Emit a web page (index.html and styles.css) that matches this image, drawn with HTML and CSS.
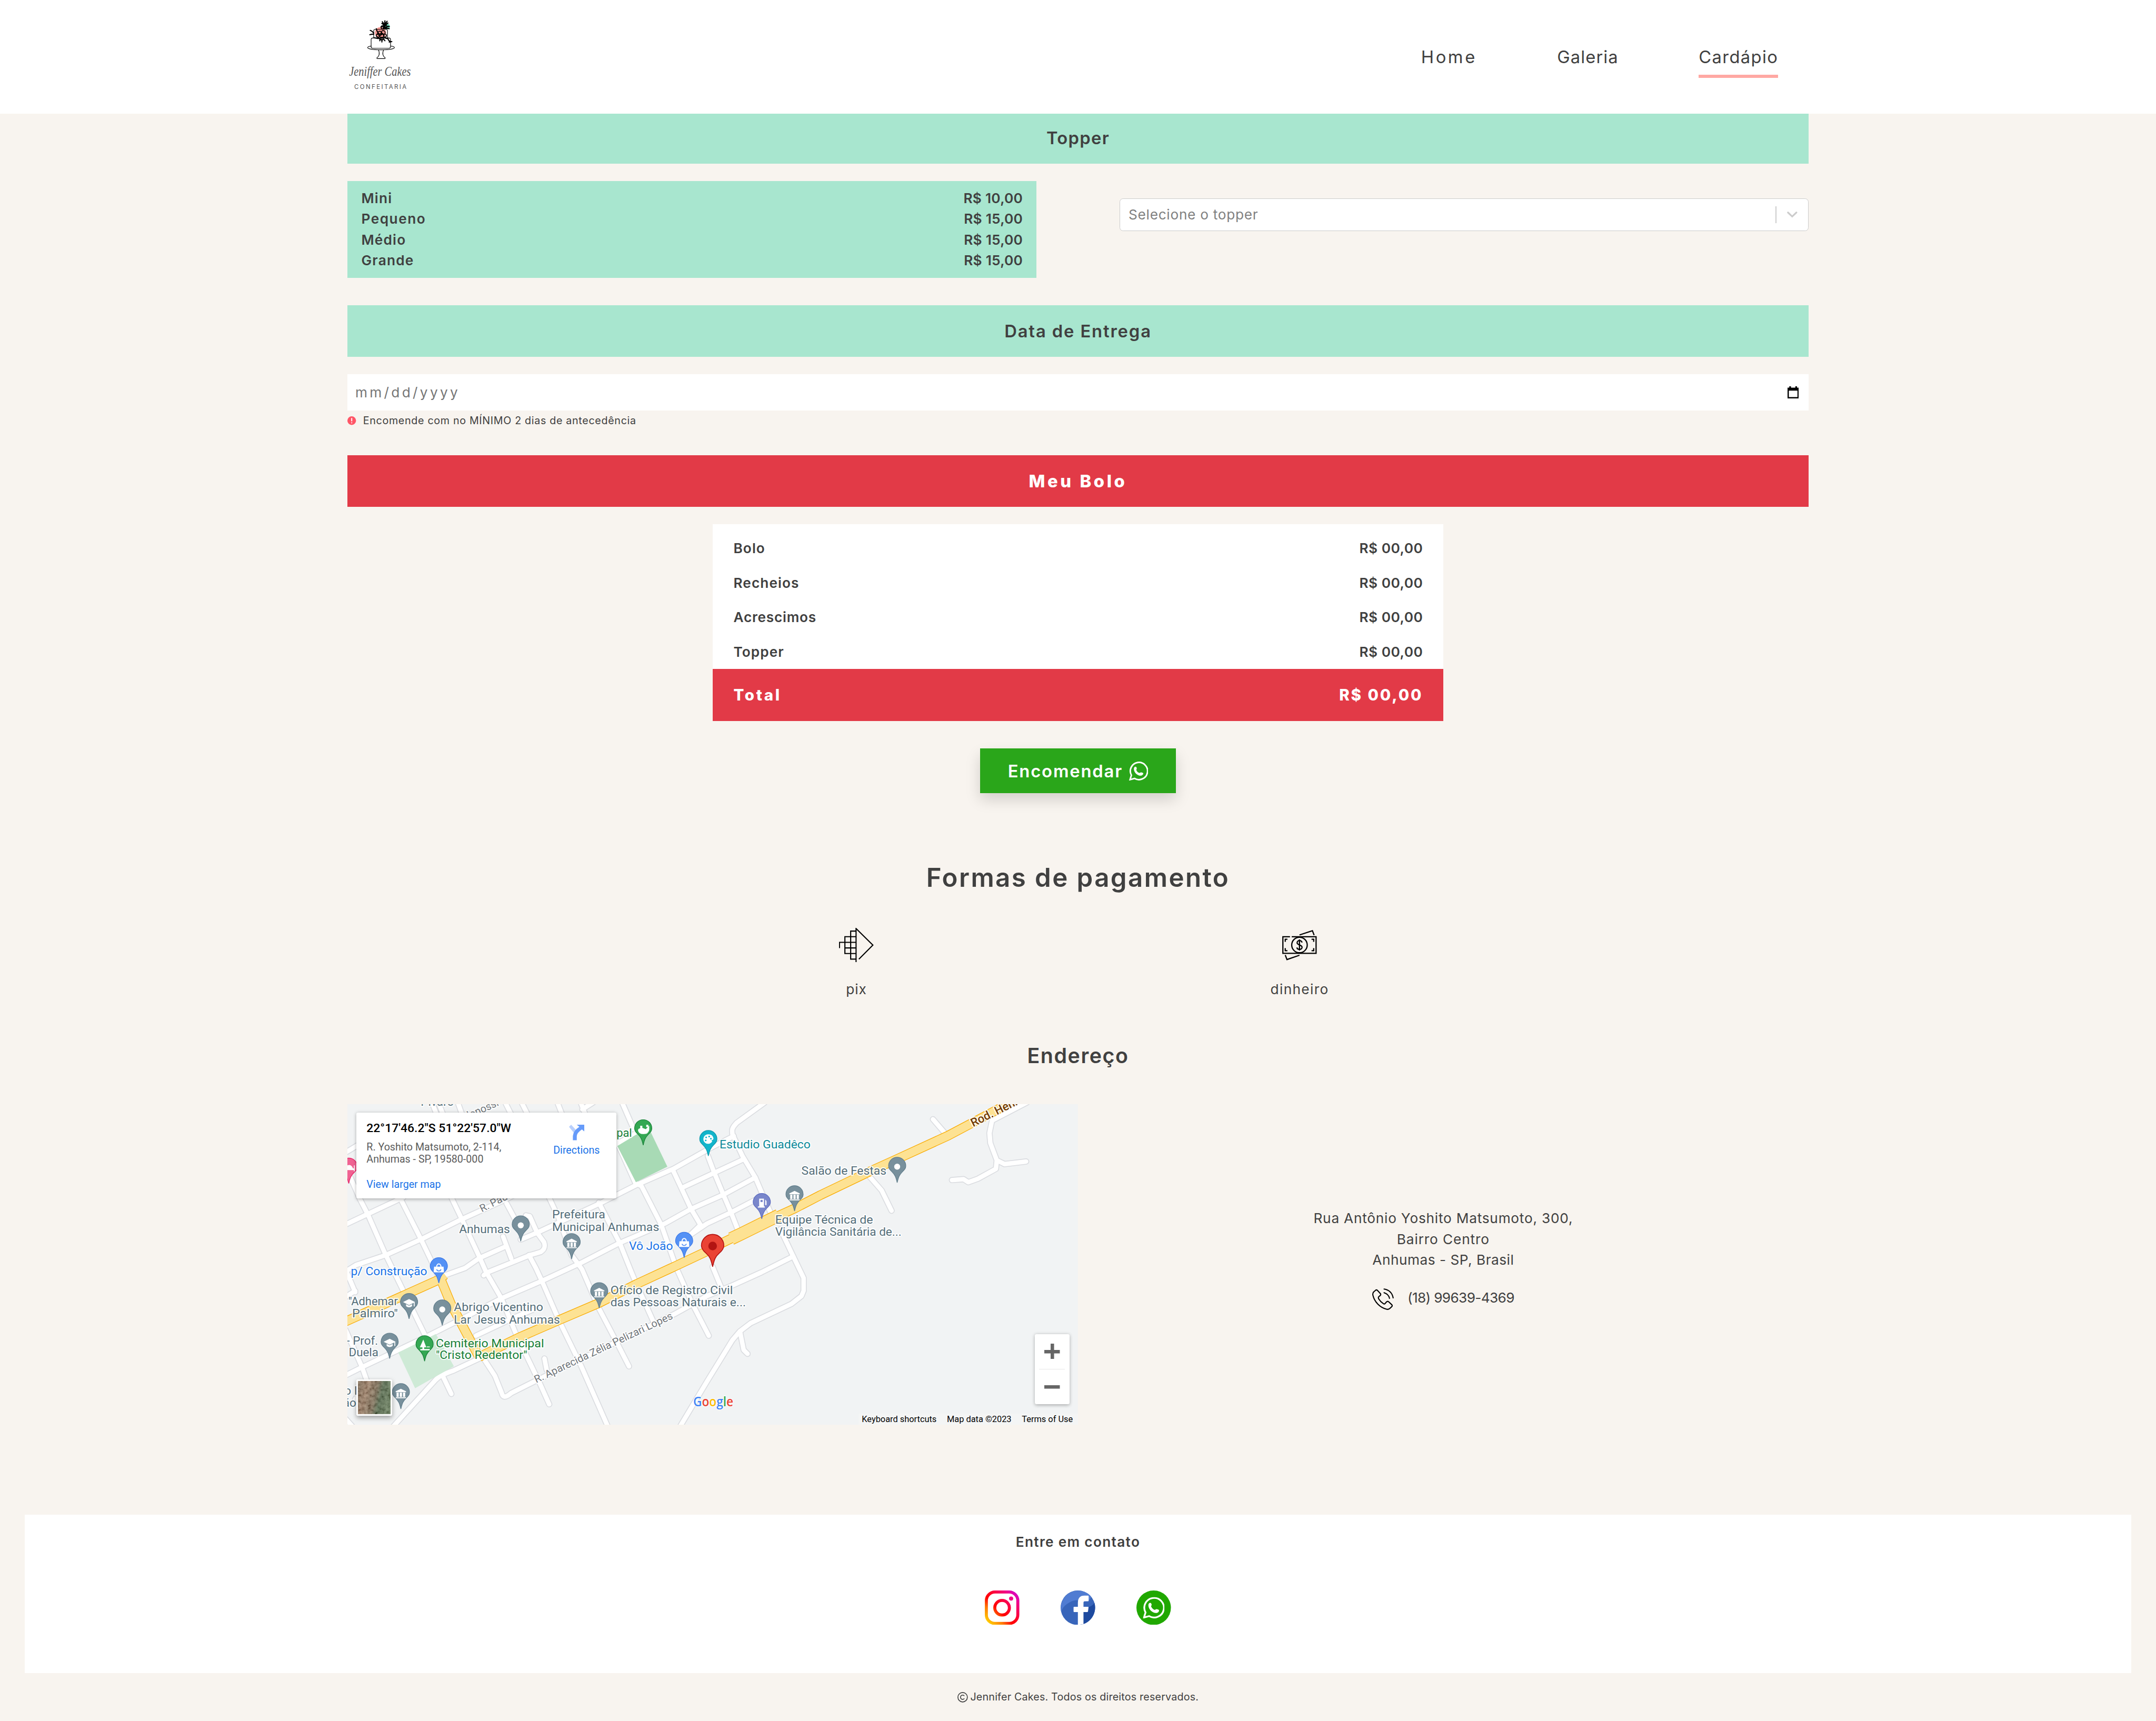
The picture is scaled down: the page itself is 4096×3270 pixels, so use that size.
FILE: index.html
```
<!DOCTYPE html>
<html lang="pt-BR">
<head>
<meta charset="utf-8">
<title>Jeniffer Cakes</title>
<link rel="stylesheet" href="styles.css">
</head>
<body>
<svg class="defs" aria-hidden="true">
  <symbol id="whatsapp" viewBox="0 0 44 44">
    <path d="M2.3 41.9 5.4 31.6A20 20 0 1 1 12.6 39.1Z" fill="none" stroke="currentColor" stroke-width="3.6"/>
    <path d="M14.5 12c2-.3 3.3 2 3.4 4.2 0 1.5-1.5 2.2-1 3.5 1.2 3.2 3.8 5.6 6.6 6.6 1.5.4 2.4-1.3 4-1.4 2.5 0 5.5 1.2 5.5 2.6 0 2.8-3 5.2-6 5.3C19 32.8 11.2 25 11.2 17c0-2.3 1.2-4.7 3.3-5z" fill="currentColor"/>
  </symbol>
</svg>

<header class="header">
  <div class="header-inner">
    <svg class="logo" viewBox="0 2 152 180">
      <circle cx="76.7" cy="36.5" r="13" fill="#ff9a94"/>
      <circle cx="92" cy="22" r="6.5" fill="#74d3b6"/>
      <g fill="none" stroke="#000" stroke-width="1.4" stroke-linecap="round">
        <path d="M61 49V32q0-3.500 3.500-3.500H89.500q3.500 0 3.500 3.500V49"/>
        <rect x="55" y="48.500" width="45" height="24" rx="4" fill="#fff"/>
        <path d="M55 67.500c-6 .5-8 1.500-8 3.500 0 3 13 5 31 5s31-2 31-5c0-2-2-3-8-3.500"/>
        <path d="M72 76c4 9 1 15-2.500 17.500-2 1-1.500 3 0 3h17c1.500 0 2-2 0-3C83 91 80 85 84 76"/>
        <path d="M53 31c4 1 5 3 8 6M52 41c4-1 6-2 9-1M67 27c1 5 3 9 7 12M97 58l6-1M94 50c1 4 2 6 6 7" stroke-width="2.600"/>
        <path d="M83 26c3-4 4-8 4-17M80 15c3 1 6 5 7 11M94 14c-4 2-7 7-8 12M78 23c3-2 8 0 12 3M97 22c-4-1-7 1-10 4M81 11l6 8M92 10l-5 7M97 27c-3-1-6-1-9 0" stroke-width="2.800"/>
        <path d="M76 50l-1 5M80 50v8M84 51l3 4M62 48l9 2M70 46l6 6M86 48l6 2" stroke-width="2.600"/>
      </g>
      <g fill="none" stroke="#000" stroke-width="2">
        <circle cx="82" cy="24" r="4"/><circle cx="88" cy="22" r="3.500"/>
        <circle cx="75" cy="38" r="5"/><circle cx="83" cy="36" r="4.500"/><circle cx="80" cy="43" r="5"/><circle cx="71" cy="43" r="4"/><circle cx="87" cy="43" r="3.500"/><circle cx="80" cy="50" r="3.500"/><circle cx="79" cy="39" r="2"/>
      </g>
      <text class="logo-name" x="4" y="136" textLength="143" lengthAdjust="spacingAndGlyphs">Jeniffer Cakes</text>
      <text class="logo-tag" x="16" y="167" textLength="121">CONFEITARIA</text>
    </svg>
    <nav class="nav">
      <a class="nav-link ls-home">Home</a>
      <a class="nav-link ls-galeria">Galeria</a>
      <a class="nav-link ls-cardapio active">Cardápio</a>
    </nav>
  </div>
</header>

<main class="container">
  <h2 class="bar bar-first">Topper</h2>
  <div class="topper">
    <ul class="prices">
      <li><span class="ls-mini">Mini</span><span class="ls-price">R$ 10,00</span></li>
      <li><span class="ls-pequeno">Pequeno</span><span class="ls-price">R$ 15,00</span></li>
      <li><span class="ls-mini">Médio</span><span class="ls-price">R$ 15,00</span></li>
      <li><span class="ls-mini">Grande</span><span class="ls-price">R$ 15,00</span></li>
    </ul>
    <div class="select">
      <span class="select-text">Selecione o topper</span>
      <span class="select-sep"></span>
      <svg class="chevron" viewBox="0 0 24 14"><path d="M2.200 2.200 12 11.400 21.800 2.200" fill="none" stroke="#ccc" stroke-width="4" stroke-linecap="round"/></svg>
    </div>
  </div>

  <h2 class="bar ls-data">Data de Entrega</h2>
  <div class="date">
    <span>mm/dd/yyyy</span>
    <svg class="calendar" viewBox="0 0 26 28"><path d="M1.500 5h23v21.500h-23z" fill="none" stroke="#000" stroke-width="3"/><path d="M0 3.500h26V10H0zM4 0h4v4H4zM18 0h4v4h-4z"/></svg>
  </div>
  <p class="hint">
    <svg viewBox="0 0 20 20"><circle cx="10" cy="10" r="10" fill="#ff5566"/><path d="M10 4v7.500M10 14v2.300" stroke="#fff" stroke-width="2.400"/></svg>
    <span>Encomende com no MÍNIMO 2 dias de antecedência</span>
  </p>

  <h2 class="bar bar-red">Meu Bolo</h2>
  <div class="summary">
    <ul class="summary-rows">
      <li><span>Bolo</span><span class="ls-zero">R$ 00,00</span></li>
      <li><span>Recheios</span><span class="ls-zero">R$ 00,00</span></li>
      <li><span class="ls-acres">Acrescimos</span><span class="ls-zero">R$ 00,00</span></li>
      <li><span>Topper</span><span class="ls-zero">R$ 00,00</span></li>
    </ul>
    <div class="total"><span>Total</span><span class="ls-total">R$ 00,00</span></div>
  </div>
  <button class="order"><span>Encomendar</span><svg><use href="#whatsapp"/></svg></button>

  <h2 class="title-lg">Formas de pagamento</h2>
  <div class="payments">
    <div class="payment">
      <svg class="pay-icon" viewBox="0 0 80 80"><g fill="none" stroke="#000" stroke-width="2.600"><path d="M39.500 80V1.500L78.500 40 46 72.500"/><path d="M39.500 7.500H27v65h12.500M39.500 20.500H13.600v39h25.900M1 47V33.500h38.500M13.600 46.500h25.900"/></g></svg>
      <span>pix</span>
    </div>
    <div class="payment">
      <svg class="pay-icon" viewBox="0 -5 80 80"><g fill="none" stroke="#000" stroke-width="2.800"><path d="M18 15.500H1.500v38.500h77V15.500H22"/><circle cx="40" cy="34.700" r="18"/><path d="M40 11.500 70 1.500l4 10.500M7 58l4 10.500L40 58.500"/><path d="M12 21.500H7v6M68 21.500h5v6M12 48H7v-6M68 48h5v-6"/><path d="M46 29c-1-3.500-3-4.500-6-4.500s-5.500 2-5.500 5c0 6.500 11.500 4 11.500 10.500 0 3-2.500 5-6 5s-5.500-1.500-6-4.500M40 22v25.500"/></g></svg>
      <span class="ls-dinheiro">dinheiro</span>
    </div>
  </div>

  <h2 class="title-md">Endereço</h2>
  <div class="address">
    <div class="map">
      <svg class="map-canvas" viewBox="0 0 1694 744">
        <defs>
          <g id="streets">
            <path d="M-6 174 7 170 29 220 48 257 89 350 117 407 182 540"/>
            <path d="M125 223 169 310 204 383 212 405"/>
            <path d="M242 218 265 266 306 354 321 388 358 452 391 533 446 647 468 696"/>
            <path d="M369 230 396 280"/><path d="M361 307 380 358"/>
            <path d="M414 258 423 260 440 298 456 320C460 332 456 338 448 343L424 350 325 390 316 397"/>
            <path d="M421 350 437 380 451 410 490 500 542 607 605 750"/>
            <path d="M467 215 490 264 520 350 544 383 583 473 627 557 653 608"/>
            <path d="M583 228 632 323 656 383 668 412 709 503"/>
            <path d="M615 65 668 183 682 190 728 280 763 380 802 467 834 529 838 537"/>
            <path d="M637-4 664 58"/><path d="M366-4 380 24M404-4 418 24M487-4 498 24M541-4 552 24M545 12 570-4M196-4 207 24M211-4 222 24M256-4 266 24"/>
            <path d="M755 153 797 243 819 280 786 312"/>
            <path d="M836 120 850 157 872 210 892 257 905 290"/>
            <path d="M968-4 903 43C890 57 892 60 893 70L916 120 946 170 963 210 983 255"/>
            <path d="M1004 290 1034 353 1058 403 1058 433 1053 445 1030 463 935 508 910 527 893 547 834 643 770 750"/>
            <path d="M911 530 919 570 928 579"/>
            <path d="M-4 112 24 95"/><path d="M-4 279 51 253 130 216"/>
            <path d="M-4 388 20 373 89 350 172 313 265 267 369 220 627 91 672 66"/>
            <path d="M226 397 273 380 306 357 365 331"/>
            <path d="M402 314 440 298 586 230 671 187 756 150 845 100 896 74"/>
            <path d="M-4 629 34 610 182 540 281 490 358 450 451 410 542 368 629 323 736 277 797 243 872 210 946 170"/>
            <path d="M780 192 834 167 918 128"/>
            <path d="M770 320 834 277 892 250 944 223"/>
            <path d="M298 537 391 493 429 477"/>
            <path d="M847 377 868 428"/>
            <path d="M104 750 204 640C215 628 230 624 248 617L312 587"/>
            <path d="M314 587 342 630 358 670C360 680 366 682 380 670L446 637 758 487 834 445 896 419 960 390 1034 353"/>
            <path d="M221 630 241 672M457 590 462 616"/>
            <path d="M0 393 18 436M-4 447 18 433M-4 524 34 610 48 650M-4 730 14 750M18 684 40 660"/>
            <path d="M1358 35 1390 72"/><path d="M1211 168 1239 200 1262 247"/>
            <path d="M1576-4 1495 38 1489 67 1491 90 1506 130 1504 150 1462 173 1440 181 1429 174 1402 176M1506 130 1524 139 1574 133"/>
          </g>
          <g id="highway">
            <path d="M-6 505 212 407 226 396"/><path d="M214 400 240 463 305 586"/>
            <path d="M306 586 396 542 495 499 584 461 671 417 764 374 834 341 867 323 916 299 993 262 1037 242 1097 211 1218 153 1273 128 1393 73 1514 9 1540-6"/>
          </g>
          <path id="pin" d="M0 0C-3-13-5-18-12-25-17-30-20-33-20-39A19.500 19.500 0 0 1 20-39C20-33 17-30 12-25 5-18 3-13 0 0Z" stroke-width="1.500"/>
          <g id="bank" fill="#fff"><path d="M-12-43 0-49 12-43v2h-24zM-10-40h5v10h-5zM-2.500-40h5v10h-5zM5-40h5v10H5zM-12-29h24v2h-24z"/></g>
          <g id="school" fill="#fff"><path d="M-14-39 0-46 14-39 0-32zM-7-34 0-30.500 7-34v4.500Q0-24 -7-29.500zM11-38h2v9h-2z"/></g>
          <g id="bag"><path d="M-11-41h22l1 13h-24z" fill="#fff"/><path d="M-5-40c0-10 10-10 10 0" fill="none" stroke="#fff" stroke-width="2.500"/><path d="M-5-35c1 5 9 5 10 0" fill="none" stroke="#5491f5" stroke-width="2"/></g>
        </defs>
        <rect width="1694" height="744" fill="#f1f3f4"/>
        <use href="#streets" class="street-edge"/>
        <use href="#streets" class="street"/>
        <path d="M626 97 684 62 704 66 742 145 669 181Z" fill="#a8dab5"/>
        <path d="M118 576 205 533 247 608 157 659Z" fill="#ceead6"/>
        <use href="#highway" class="highway-edge"/>
        <path d="M890 312 915 300 1000 258" class="highway-edge wide"/>
        <use href="#highway" class="highway"/>
        <path d="M890 312 915 300 1000 258" class="highway wide"/>

        <g class="poi">
          <text x="170" y="4" textLength="77" lengthAdjust="spacingAndGlyphs">Pivaro</text>
          <text x="475" y="265" textLength="123" lengthAdjust="spacingAndGlyphs">Prefeitura</text>
          <text x="475" y="294" textLength="248" lengthAdjust="spacingAndGlyphs">Municipal Anhumas</text>
          <text x="259" y="299" textLength="118" lengthAdjust="spacingAndGlyphs">Anhumas</text>
          <text x="2" y="466" textLength="115" lengthAdjust="spacingAndGlyphs">"Adhemar</text>
          <text x="11" y="494" textLength="106" lengthAdjust="spacingAndGlyphs">Palmiro"</text>
          <text x="247" y="480" textLength="207" lengthAdjust="spacingAndGlyphs">Abrigo Vicentino</text>
          <text x="247" y="509" textLength="246" lengthAdjust="spacingAndGlyphs">Lar Jesus Anhumas</text>
          <text x="-2" y="558" textLength="73" lengthAdjust="spacingAndGlyphs">- Prof.</text>
          <text x="3" y="585" textLength="69" lengthAdjust="spacingAndGlyphs">Duela</text>
          <text x="-7" y="674">o I</text>
          <text x="-10" y="702">ão</text>
          <text x="610" y="441" textLength="284" lengthAdjust="spacingAndGlyphs">Ofício de Registro Civil</text>
          <text x="610" y="469" textLength="314" lengthAdjust="spacingAndGlyphs">das Pessoas Naturais e...</text>
          <text x="1053" y="164" textLength="197" lengthAdjust="spacingAndGlyphs">Salão de Festas</text>
          <text x="992" y="277" textLength="227" lengthAdjust="spacingAndGlyphs">Equipe Técnica de</text>
          <text x="992" y="305" textLength="293" lengthAdjust="spacingAndGlyphs">Vigilância Sanitária de...</text>
          <g class="shop"><text x="653" y="338" textLength="102" lengthAdjust="spacingAndGlyphs">Vô João</text><text x="8" y="397" textLength="177" lengthAdjust="spacingAndGlyphs">p/ Construção</text></g>
          <g class="park"><text x="624" y="76" textLength="36" lengthAdjust="spacingAndGlyphs">pal</text><text x="205" y="564" textLength="251" lengthAdjust="spacingAndGlyphs">Cemiterio Municipal</text><text x="205" y="591" textLength="212" lengthAdjust="spacingAndGlyphs">"Cristo Redentor"</text></g>
          <text class="art" x="863" y="102" textLength="211" lengthAdjust="spacingAndGlyphs">Estudio Guadêco</text>
        </g>
        <g class="road-name">
          <text transform="translate(438 647) rotate(-25.300)" textLength="352" lengthAdjust="spacingAndGlyphs">R. Aparecida Zélia Pelizari Lopes</text>
          <text transform="translate(312 251) rotate(-27)" textLength="88" lengthAdjust="spacingAndGlyphs">R. Paulo</text>
          <text transform="translate(282 34) rotate(-24)">lonossi</text>
          <text class="rod" transform="translate(1451 53) rotate(-26.500)">Rod. Henr</text>
        </g>

        <g class="pin-slate">
          <use href="#pin" x="402" y="318"/><use href="#pin" x="520" y="359"/><use href="#pin" x="143" y="498"/><use href="#pin" x="220" y="513"/><use href="#pin" x="98" y="590"/><use href="#pin" x="124" y="707"/><use href="#pin" x="584" y="473"/><use href="#pin" x="1037" y="248"/><use href="#pin" x="1275" y="182"/>
        </g>
        <g fill="#fff"><circle cx="402" cy="281" r="7"/><circle cx="220" cy="476" r="7"/><circle cx="1275" cy="145" r="7"/></g>
        <use href="#bank" x="520" y="361"/><use href="#bank" x="124" y="709"/><use href="#bank" x="584" y="475"/><use href="#bank" x="1037" y="250"/>
        <use href="#school" x="143" y="498"/><use href="#school" x="98" y="590"/>
        <g class="pin-blue"><use href="#pin" x="781" y="356"/><use href="#pin" x="212" y="415"/></g>
        <use href="#bag" x="781" y="359"/><use href="#bag" x="212" y="418"/>
        <g class="pin-green"><use href="#pin" x="686" y="95"/><use href="#pin" x="179" y="596"/></g>
        <path d="M679 50h5v5l8 3 8-8v10q-3 9-10 9-14 2-16-8 0-5 5-5zM693 48h5v5h-5z" fill="#fff"/>
        <path d="M176 546 183 564h-5v4h-4v-4h-6zM169 568h22v3h-22zM184 562h7v2h-7z" fill="#fff"/>
        <use href="#pin" x="837" y="120" fill="#12b5cb" stroke="#0d98ab"/>
        <path d="M837 70a11 11 0 1 0 8 18q2-2-1-4 5-1 5-5-2-9-12-9z" fill="#fff"/><g fill="#12b5cb"><circle cx="832" cy="77" r="2"/><circle cx="839" cy="75" r="2"/><circle cx="843" cy="80" r="2"/><circle cx="831" cy="84" r="2"/></g>
        <use href="#pin" x="961" y="266" fill="#7986cb" stroke="#5c6bc0"/>
        <path d="M955 219h11v18h2v3h-16v-3h3zM969 221l3 4v9h-3z" fill="#fff"/><path d="M958 222h5v5h-5z" fill="#7986cb"/>
        <use href="#pin" x="3" y="184" fill="#f06292" stroke="#e91e63"/>
        <path d="M0 142q9-4 13 7h2v-7h2v14h-2v-3H0z" fill="#fff"/>
        <path d="M847 377C843 360 841 354 832 346 825 340 821 335 821 328A26 26 0 0 1 873 328C873 335 869 340 862 346 853 354 851 360 847 377Z" fill="#ea4335" stroke="#b31412" stroke-width="2"/><circle cx="847" cy="329" r="10" fill="#b31412"/>

        <text class="google" x="802" y="701" textLength="93" lengthAdjust="spacingAndGlyphs"><tspan fill="#4285f4">G</tspan><tspan fill="#ea4335">o</tspan><tspan fill="#fbbc04">o</tspan><tspan fill="#4285f4">g</tspan><tspan fill="#34a853">l</tspan><tspan fill="#ea4335">e</tspan></text>
      </svg>
      <div class="place">
        <div class="place-text">
          <strong>22°17'46.2"S 51°22'57.0"W</strong>
          <p>R. Yoshito Matsumoto, 2-114,<br>Anhumas - SP, 19580-000</p>
          <a>View larger map</a>
        </div>
        <div class="directions">
          <svg viewBox="0 0 36 36"><path d="M0 5 5 0 17 13 13 21Z" fill="#b9d0fd"/><path d="M18 0H36V16L30 11Q18 19 18 27V36H9V26Q10 14 24 5Z" fill="#669bfa"/></svg>
          <a>Directions</a>
        </div>
      </div>
      <div class="satellite">
        <svg viewBox="0 0 76 76">
          <defs>
            <linearGradient id="land" x1="0" y1="0" x2="1" y2=".25"><stop offset="0" stop-color="#75624d"/><stop offset=".3" stop-color="#8f7059"/><stop offset=".6" stop-color="#6b5f49"/><stop offset=".75" stop-color="#3d5a3d"/><stop offset="1" stop-color="#4f6d4c"/></linearGradient>
            <filter id="grain" x="0" y="0" width="1" height="1"><feTurbulence type="fractalNoise" baseFrequency=".13" numOctaves="3" seed="4"/><feColorMatrix values="1.600 0 0 0 -.25  1.500 0 0 0 -.27  1.300 0 0 0 -.25  0 0 0 0 1"/></filter>
          </defs>
          <rect width="76" height="76" fill="url(#land)"/>
          <rect width="76" height="76" filter="url(#grain)" opacity=".3"/>
        </svg>
      </div>
      <div class="zoom"><span class="plus"></span><i></i><span class="minus"></span></div>
      <div class="legal"><span>Keyboard shortcuts</span><span>Map data ©2023</span><span>Terms of Use</span></div>
    </div>
    <div class="contact">
      <p>Rua Antônio Yoshito Matsumoto, 300,</p>
      <p class="ls-bairro">Bairro Centro</p>
      <p class="ls-anhumas">Anhumas - SP, Brasil</p>
      <div class="phone">
        <svg viewBox="0 0 50 50"><g fill="none" stroke="#000" stroke-width="2.600" stroke-linecap="round" stroke-linejoin="round"><path d="M7.500 4.500C9 3 10.500 3 12 4.500L18.500 11.500C20 13 20 14.500 19 16L15 19.500C13.500 21 14 22 15 24.500 18 29.500 21 32.500 26 35.500 27.500 36.500 29 36.500 30 35L33 31.500C35 29.500 36.500 29.500 38.500 31.500L45.500 38C46.500 39.500 46.500 41 45.500 42L41 46.500C39 48.500 37 49 34 48.500 18 44.500 5 31.500 1.500 15.500 1 12.500 1.300 10.500 3 8.500Z"/><path d="M27.500 1.500C39 3.500 46.500 11 48.500 22M27.500 10C34.500 12 38.500 16.500 40 23"/></g></svg>
        <span>(18) 99639-4369</span>
      </div>
    </div>
  </div>
</main>

<footer>
  <section class="social">
    <h3>Entre em contato</h3>
    <div class="social-icons">
      <svg viewBox="0 0 80 80"><defs><linearGradient id="ig" x1="0" y1="80" x2="80" y2="0" gradientUnits="userSpaceOnUse"><stop offset="0" stop-color="#fd0"/><stop offset=".1" stop-color="#ffc800"/><stop offset=".28" stop-color="#ff7a00"/><stop offset=".42" stop-color="#f00"/><stop offset=".55" stop-color="#ff0024"/><stop offset=".8" stop-color="#f0008a"/><stop offset=".9" stop-color="#d900bd"/></linearGradient></defs><rect x="3.500" y="3.500" width="73" height="73" rx="20" fill="none" stroke="url(#ig)" stroke-width="7"/><circle cx="40" cy="40" r="17" fill="none" stroke="url(#ig)" stroke-width="7"/><circle cx="61" cy="18.700" r="4.800" fill="#f0008a"/></svg>
      <svg viewBox="0 0 80 80"><circle cx="40" cy="40" r="40" fill="#3865ba"/><path d="M1.500 49A40 40 0 0 1 71 14.500Q66 27 52 25 34 19 20 28 5 36 1.500 49Z" fill="#507cd2"/><path d="M52 39.500Q70 41 78.500 29A40 40 0 0 1 52 78Z" fill="#1e4a9f"/><path d="M40 80V50H31.500Q30 50 30 48.500V39.200Q30 37.700 31.500 37.700H40V29Q40 12 55 12H63.500Q65 12 65 13.500V23.500Q65 25 63.500 25H56Q53 25 53 28V37.700H63.500Q65 37.700 64.700 39.200L63.500 48.500Q63 50 61.500 50H53V78Z" fill="#fff"/></svg>
      <svg viewBox="0 0 80 80" color="#fff"><circle cx="40" cy="40" r="40" fill="#20a800"/><svg x="15" y="15" width="50" height="50"><use href="#whatsapp"/></svg></svg>
    </div>
  </section>
  <p class="copy"><svg viewBox="0 0 24 24"><g fill="none" stroke="currentColor" stroke-width="2"><circle cx="12" cy="12" r="11"/><path d="M16 9a5 5 0 1 0 0 6"/></g></svg><span>Jennifer Cakes. Todos os direitos reservados.</span></p>
</footer>
</body>
</html>
```
FILE: styles.css
```
:root { font-size: 8.192px; }
* { box-sizing: border-box; margin: 0; padding: 0; }
body { background: #f8f4ef; color: #404040; font-family: Inter, "Open Sans", sans-serif; font-size: 3.2rem; line-height: 4.8rem; }
ul { list-style: none; }
svg { display: block; }
.defs { position: absolute; width: 0; height: 0; }

.header { background: #fff; height: 26.4rem; }
.header-inner { width: 338.8rem; height: 100%; margin: 0 auto; display: flex; align-items: center; justify-content: space-between; }
.logo { width: 15.2rem; height: 18rem; overflow: visible; }
.logo-name { font: italic 30px "Liberation Serif", serif; fill: #555; }
.logo-tag { font: 14px Inter, sans-serif; fill: #555; }
.nav { display: flex; gap: 18.6rem; margin: .2rem 7rem 0 0; }
.nav-link { font-size: 4rem; padding: 2.4rem 0 1.7rem; border-bottom: .8rem solid transparent; }
.nav-link.active { border-color: #ffa8a3; }
.ls-home { letter-spacing: .11em; }
.ls-galeria { letter-spacing: .033em; }
.ls-cardapio { letter-spacing: .042em; }

.container { width: 338.8rem; margin: 0 auto; }
.bar { height: 12rem; line-height: 12rem; margin: 6.4rem 0 4rem; background: #a8e6cf; text-align: center; font-size: 4rem; font-weight: 600; letter-spacing: .04em; }
.bar-first { height: 11.6rem; line-height: 11.3rem; margin-top: 0; }
.ls-data { letter-spacing: .057em; }
.bar-red { background: #e23a47; color: #fff; font-weight: 800; letter-spacing: .14em; margin-top: 6rem; }

.topper { display: grid; grid-template-columns: 1fr 1fr; gap: 19.2rem; align-items: start; }
.prices { background: #a8e6cf; padding: 1.6rem 3.2rem; font-weight: 600; }
.prices li, .summary-rows li, .total { display: flex; justify-content: space-between; }
.ls-mini { letter-spacing: .046em; }
.ls-pequeno { letter-spacing: .058em; }
.ls-price { letter-spacing: .01em; }
.select { margin-top: 4rem; height: 7.6rem; display: flex; align-items: center; padding: 0 2.4rem 0 2rem; background: #fff; border: .2rem solid #ccc; border-radius: .8rem; }
.select-text { flex: 1; color: #808080; letter-spacing: .028em; }
.select-sep { width: .2rem; height: 4rem; background: #ccc; margin-right: 2.5rem; }
.chevron { width: 2.4rem; height: 1.4rem; }

.date { height: 8.4rem; padding: 0 2.3rem 0 1.8rem; display: flex; align-items: center; justify-content: space-between; background: #fff; color: #757575; letter-spacing: .165em; }
.calendar { width: 2.6rem; height: 2.8rem; }
.hint { display: flex; align-items: center; gap: 1.6rem; height: 4.4rem; padding-top: .4rem; font-size: 2.4rem; letter-spacing: .035em; }
.hint svg { width: 2rem; height: 2rem; }

.summary { width: 169.4rem; margin: 0 auto; background: #fff; }
.summary-rows { padding-top: 1.6rem; font-weight: 600; letter-spacing: .042em; line-height: 8rem; }
.summary-rows li { padding: 0 4.700rem 0 4.8rem; }
.ls-acres { letter-spacing: .03em; }
.ls-zero { letter-spacing: .02em; }
.total { height: 12rem; line-height: 12rem; padding: 0 4.7rem 0 4.8rem; background: #e23a47; color: #fff; font-size: 3.6rem; font-weight: 800; letter-spacing: .125em; }
.ls-total { letter-spacing: .1em; }
.order { display: flex; align-items: center; gap: 1.5rem; height: 10.4rem; margin: 6.4rem auto 0; padding: 0 6.4rem 0 6.4rem; border: 0; background: #2aa61a; color: #fff; font: 600 4rem Inter, sans-serif; letter-spacing: .056em; box-shadow: 0 1.6rem 3.2rem rgba(0,0,0,.15); }
.order svg { width: 4.4rem; height: 4.4rem; }

.title-lg { margin-top: 16rem; text-align: center; font-size: 6rem; line-height: 7.2rem; font-weight: 600; letter-spacing: .05em; }
.payments { display: grid; grid-template-columns: 102.8rem 102.8rem; justify-content: center; margin-top: 8rem; }
.payment { display: flex; flex-direction: column; align-items: center; gap: 3.9rem; letter-spacing: .034em; }
.ls-dinheiro { letter-spacing: .052em; }
.pay-icon { width: 8rem; height: 8rem; }
.title-md { margin-top: 9.9rem; text-align: center; font-size: 4.8rem; line-height: 6.2rem; font-weight: 600; letter-spacing: .04em; }
.address { display: grid; grid-template-columns: 1fr 1fr; margin-top: 8.1rem; }

.map { position: relative; height: 74.4rem; overflow: hidden; font-family: Roboto, sans-serif; }
.map-canvas { width: 100%; height: 100%; font: 500 26px Roboto, sans-serif; }
.street, .street-edge, .highway, .highway-edge { fill: none; stroke-linecap: round; stroke-linejoin: round; }
.street-edge { stroke: #dadce0; stroke-width: 14.500px; }
.street { stroke: #fff; stroke-width: 10.500px; }
.highway-edge { stroke: #f9ab00; stroke-width: 22px; stroke-linecap: butt; }
.highway { stroke: #fde293; stroke-width: 19px; stroke-linecap: butt; }
.highway-edge.wide { stroke-width: 30px; }
.highway.wide { stroke-width: 27px; }
.poi text, .road-name text, .google { paint-order: stroke; stroke: #fff; stroke-opacity: .85; stroke-width: 5px; stroke-linejoin: round; }
.poi { fill: #546e7a; font-size: 27.5px; font-weight: 400; }
.shop { fill: #1a73e8; }
.park { fill: #188038; }
.poi .art { fill: #0d8a9a; }
.road-name { fill: #70757a; font-size: 24px; font-weight: 400; }
.rod { fill: #733b00; font-size: 27px; font-weight: 500; }
.pin-slate { fill: #78909c; stroke: #607d8b; }
.pin-blue { fill: #5491f5; stroke: #3b78e7; }
.pin-green { fill: #34a853; stroke: #188038; }
.map-canvas .google { font: 600 31px "Open Sans", sans-serif; stroke-width: 3px; }

.place { position: absolute; left: 2rem; top: 2rem; width: 60.3rem; height: 19.9rem; padding: 2.1rem 3.8rem 0 2.4rem; display: flex; justify-content: space-between; background: #fff; border-radius: .4rem; box-shadow: 0 .2rem .8rem rgba(0,0,0,.3); font-size: 2.4rem; line-height: 2.8rem; }
.place strong { display: block; font-size: 2.8rem; line-height: 3.2rem; font-weight: 500; color: #000; }
.place p { margin: 1.4rem 0 3rem; color: #5b5b5b; }
.place a { color: #1a73e8; }
.directions { display: flex; flex-direction: column; align-items: center; gap: 1rem; padding-top: .7rem; }
.directions svg { width: 3.6rem; height: 3.6rem; }
.satellite { position: absolute; left: 2rem; top: 63.9rem; width: 8.4rem; height: 8.4rem; border: .4rem solid #fff; border-radius: .4rem; box-shadow: 0 .4rem 1rem rgba(0,0,0,.35); }
.satellite svg { width: 100%; height: 100%; }
.zoom { position: absolute; right: 2rem; top: 53.4rem; width: 8rem; height: 16.2rem; display: flex; flex-direction: column; align-items: center; background: #fff; border-radius: .4rem; box-shadow: 0 .2rem .8rem rgba(0,0,0,.3); }
.zoom i { width: 6rem; height: .2rem; background: #e6e6e6; }
.plus, .minus { flex: 1; width: 3.6rem; background: linear-gradient(#666, #666) center / 3.6rem .8rem no-repeat; }
.plus { background: linear-gradient(#666, #666) center / 3.6rem .8rem no-repeat, linear-gradient(#666, #666) center / .8rem 3.6rem no-repeat; }
.legal { position: absolute; right: 0; bottom: 0; display: flex; gap: 2.4rem; padding: 0 1.2rem 0 .8rem; background: rgba(245,245,245,.7); color: #000; font-size: 2rem; line-height: 2.6rem; }

.contact { display: flex; flex-direction: column; align-items: center; padding-top: 24.1rem; letter-spacing: .03em; }
.ls-bairro { letter-spacing: .034em; }
.ls-anhumas { letter-spacing: .02em; }
.phone { display: flex; align-items: center; gap: 3.2rem; margin-top: 4.3rem; letter-spacing: -.024em; }
.phone svg { width: 5rem; height: 5rem; }
.phone span { margin-top: -.7rem; }

.social { margin: 20.8rem 5.7rem 0; height: 36.8rem; padding-top: 3.9rem; background: #fff; text-align: center; }
.social h3 { font-size: 3.2rem; font-weight: 600; letter-spacing: .05em; }
.social-icons { display: flex; justify-content: center; gap: 9.6rem; margin-top: 8.9rem; }
.social-icons > svg { width: 8rem; height: 8rem; }
.copy { display: flex; justify-content: center; align-items: center; gap: .6rem; margin-top: 3.8rem; font-size: 2.4rem; line-height: 3.6rem; letter-spacing: .01em; }
.copy svg { width: 2.4rem; height: 2.4rem; }
```
